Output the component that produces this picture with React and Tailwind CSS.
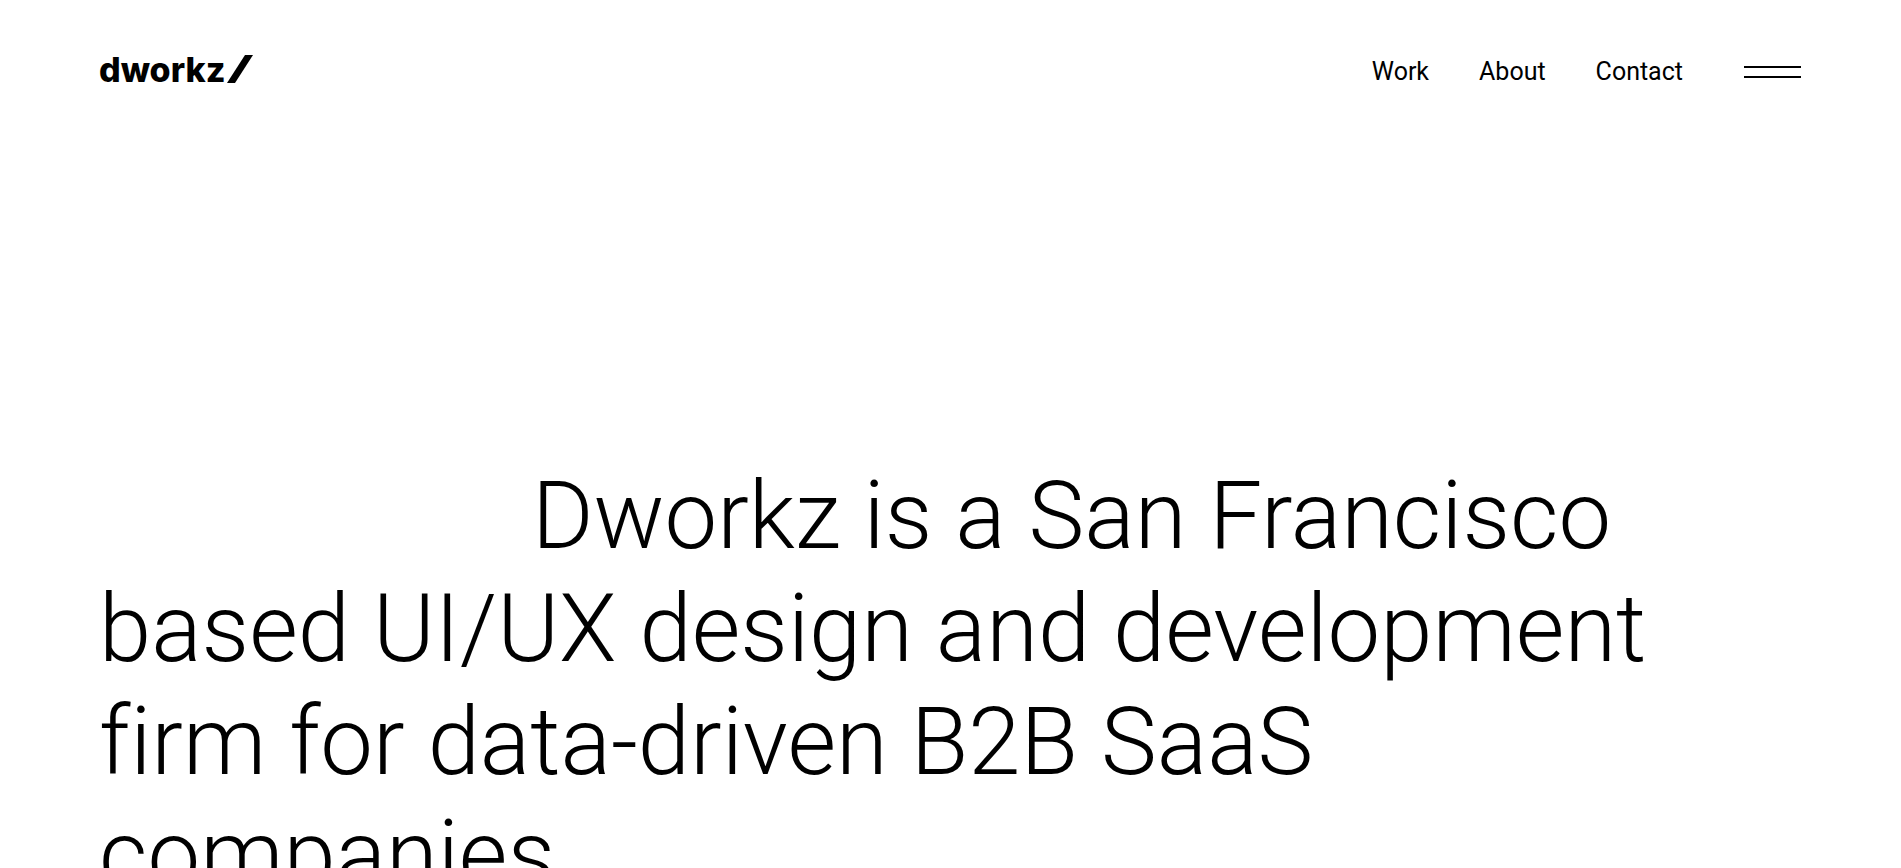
const links = ["Work", "About", "Contact"];

const headline = [
	"Dworkz is a San Francisco",
	"based UI/UX design and development",
	"firm for data-driven B2B SaaS",
	"companies",
];

function Logo() {
	return (
		<a href="#" aria-label="dworkz" className="flex items-center text-black">
			<span className="font-['Inter',sans-serif] text-[34px] leading-10 font-extrabold">dworkz</span>
			<svg width="28" height="30" viewBox="0 0 28 30" fill="currentColor">
				<path d="M2 28 20 0h8L10 28z" />
			</svg>
		</a>
	);
}

export default function App() {
	return (
		<div className="h-screen overflow-hidden bg-white font-['Roboto',sans-serif] text-black">
			<header className="flex items-start justify-between pt-[50px] pr-[100px] pl-[99px]">
				<Logo />
				<nav className="flex items-center gap-[50px] text-[25px] leading-[44px]">
					{links.map((label) => (
						<a key={label} href="#">
							{label}
						</a>
					))}
					<button aria-label="Menu" className="ml-[11px] flex w-[57px] flex-col gap-2">
						<span className="h-0.5 w-full bg-black" />
						<span className="h-0.5 w-full bg-black" />
					</button>
				</nav>
			</header>
			<main className="pt-[366px] pr-[100px] pl-[99px]">
				<h1 className="indent-[433px] text-[94px] leading-[113px] font-light [font-variant-ligatures:none]">
					{headline.map((line, i) => (
						<span key={line} className={i === 0 ? "block" : "block indent-0"}>
							{line}{" "}
						</span>
					))}
				</h1>
			</main>
		</div>
	);
}
